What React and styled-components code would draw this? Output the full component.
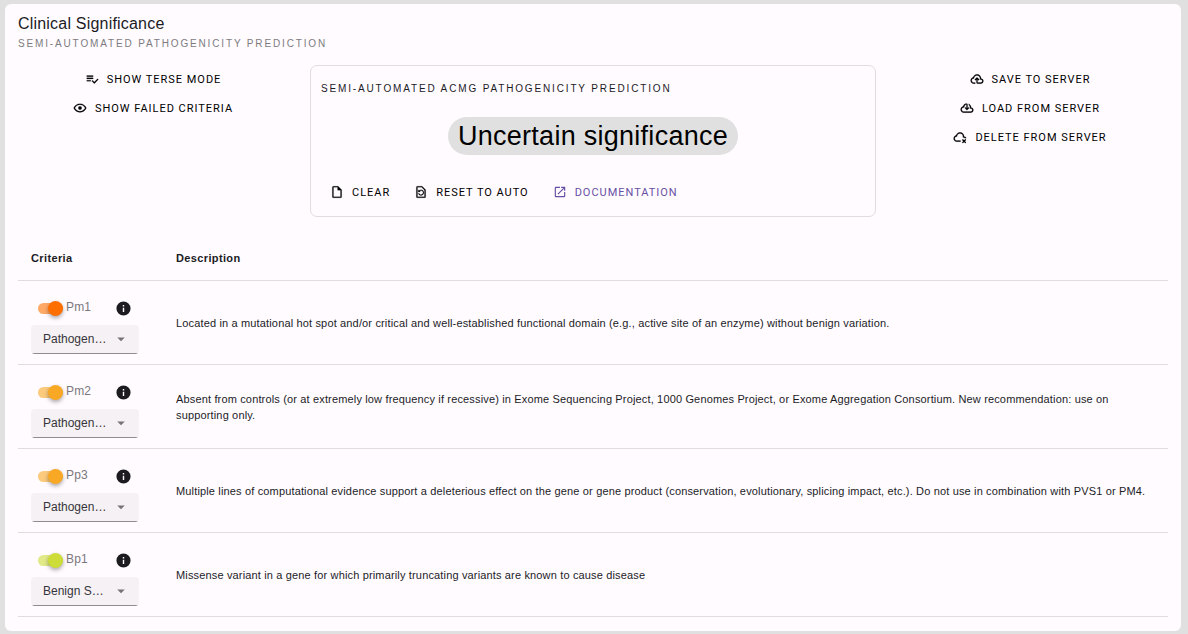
import React, { useState } from "react";
import styled, { createGlobalStyle } from "styled-components";

const GlobalStyle = createGlobalStyle`
  *, *::before, *::after { box-sizing: border-box; }
  body {
    margin: 0;
    background: #e0e0e0;
    color: #1c1b1f;
    font-family: "Liberation Sans", Arial, sans-serif;
  }
`;

const Card = styled.main`
  margin: 4px 7px 3px 5px;
  padding: 10px 13px 14px;
  background: #fffbff;
  border-radius: 6px;
`;

const Title = styled.h1`
  margin: 0;
  font-size: 16px;
  font-weight: 400;
  line-height: 20px;
  letter-spacing: 0.0125em;
`;

const Overline = styled.p`
  margin: 0;
  font-size: 10px;
  line-height: 20px;
  letter-spacing: 0.185em;
  text-transform: uppercase;
  color: ${(p) => (p.$muted ? "#7d7b80" : "#1c1b1f")};
`;

const Top = styled.section`
  display: grid;
  grid-template-columns: 270px minmax(0, 1fr) 270px;
  gap: 22px;
  margin-top: 11px;
`;

const Actions = styled.div`
  display: flex;
  flex-direction: column;
  align-items: center;
  padding-right: ${(p) => (p.$inset ? "6px" : "0")};
`;

const actionStyle = `
  display: inline-flex;
  align-items: center;
  gap: 8px;
  height: 29px;
  padding: 0 9px 2px;
  border: 0;
  background: none;
  font-family: Roboto, "Liberation Sans", sans-serif;
  font-size: 11px;
  line-height: 16px;
  letter-spacing: 0.0893em;
  text-transform: uppercase;
  text-decoration: none;
  white-space: nowrap;
  cursor: pointer;
`;

const ActionButton = styled.button`
  ${actionStyle}
  color: #000;
`;

const ActionLink = styled.a`
  ${actionStyle}
  color: #6750a4;
`;

const ActionText = styled.span`
  padding-top: 2px;
`;

const Glyph = styled.svg`
  width: ${(p) => p.$size}px;
  height: ${(p) => p.$size}px;
  fill: currentColor;
  stroke: ${(p) => (p.$bold ? "currentColor" : "none")};
  stroke-width: 0.3;
  flex: none;
`;

const Prediction = styled.div`
  padding: 13px 10px 9px;
  border: 1px solid #e0dce0;
  border-radius: 7px;
`;

const ChipRow = styled.div`
  display: flex;
  justify-content: center;
  padding: 18px 0 23px;
`;

const Chip = styled.span`
  padding: 0 10px;
  border-radius: 19px;
  background: #e0e0e0;
  color: #000;
  font-size: 27px;
  line-height: 38px;
  letter-spacing: 0.01em;
`;

const Toolbar = styled.div`
  display: flex;
  gap: 6px;
`;

const Table = styled.table`
  width: 100%;
  margin-top: 19px;
  border-collapse: separate;
  border-spacing: 0;
  table-layout: fixed;
  font-size: 11px;
  line-height: 16px;
  letter-spacing: 0.014em;
`;

const HeadCell = styled.th`
  width: ${(p) => (p.$narrow ? "145px" : "auto")};
  height: 45px;
  padding: 0 13px;
  border-bottom: 1px solid #e0dce0;
  text-align: left;
  font-weight: 700;
  letter-spacing: 0.0333em;
`;

const Cell = styled.td`
  height: 84px;
  padding: 0 13px;
  border-bottom: 1px solid #e0dce0;
`;

const Criterion = styled.div`
  display: flex;
  flex-direction: column;
  width: 108px;
  padding-top: 7px;
`;

const SwitchRow = styled.div`
  display: flex;
  align-items: center;
  justify-content: space-between;
  height: 20px;
  margin-bottom: 6px;
  padding: 0 7px;
`;

const SwitchLabel = styled.label`
  display: flex;
  align-items: center;
  gap: 3px;
  color: #7a787c;
  font-size: 12px;
  letter-spacing: 0.014em;
  cursor: pointer;
`;

const SwitchText = styled.span`
  padding-bottom: 3px;
`;

const Switch = styled.input`
  appearance: none;
  display: flex;
  align-items: center;
  justify-content: flex-end;
  width: 25px;
  height: 11px;
  margin: 0;
  border-radius: 6px;
  background: ${(p) => p.$track};
  cursor: pointer;

  &::before {
    content: "";
    width: 15px;
    height: 15px;
    flex: none;
    border-radius: 50%;
    background: ${(p) => p.$thumb};
    box-shadow: 0 2px 4px rgba(0, 0, 0, 0.35);
  }

  &:not(:checked) {
    justify-content: flex-start;
  }
`;

const InfoButton = styled.button`
  display: flex;
  padding: 0;
  border: 0;
  background: none;
  color: #1c1b1f;
  cursor: pointer;
`;

const SelectBox = styled.div`
  display: grid;
  align-items: center;
  height: 29px;
  padding-bottom: 1px;
  border-radius: 4px;
  background: linear-gradient(to top, #8f8c90 1px, #f5f1f5 1px);
  color: #757378;

  & > * {
    grid-area: 1 / 1;
  }

  & > svg {
    justify-self: end;
    margin-right: 9px;
    pointer-events: none;
  }
`;

const Select = styled.select`
  appearance: none;
  width: 100%;
  height: 28px;
  padding: 0 32px 0 12px;
  border: 0;
  background: none;
  color: #37353a;
  font-family: inherit;
  font-size: 12px;
  letter-spacing: 0;
  text-overflow: ellipsis;
  white-space: nowrap;
  overflow: hidden;
  cursor: pointer;
`;

const paths = {
  terse:
    "M14 10H3V12H14V10M14 6H3V8H14V6M3 16H10V14H3V16M21.5 11.5L23 13L16 20L11.5 15.5L13 14L16 17L21.5 11.5Z",
  eye: "M12,9A3,3 0 0,1 15,12A3,3 0 0,1 12,15A3,3 0 0,1 9,12A3,3 0 0,1 12,9M12,4.5C17,4.5 21.27,7.61 23,12C21.27,16.39 17,19.5 12,19.5C7,19.5 2.73,16.39 1,12C2.73,7.61 7,4.5 12,4.5M3.18,12C4.83,15.36 8.24,17.5 12,17.5C15.76,17.5 19.17,15.36 20.82,12C19.17,8.64 15.76,6.5 12,6.5C8.24,6.5 4.83,8.64 3.18,12Z",
  upload:
    "M6.5 20Q4.22 20 2.61 18.43 1 16.85 1 14.58 1 12.63 2.17 11.1 3.35 9.57 5.25 9.15 5.88 6.85 7.75 5.43 9.63 4 12 4 14.93 4 16.96 6.04 19 8.07 19 11 20.73 11.2 21.86 12.5 23 13.78 23 15.5 23 17.38 21.69 18.69 20.38 20 18.5 20H13Q12.18 20 11.59 19.41 11 18.83 11 18V12.85L9.4 14.4L8 13L12 9L16 13L14.6 14.4L13 12.85V18H18.5Q19.55 18 20.27 17.27 21 16.55 21 15.5 21 14.45 20.27 13.73 19.55 13 18.5 13H17V11Q17 8.93 15.54 7.46 14.08 6 12 6 9.93 6 8.46 7.46 7 8.93 7 11H6.5Q5.05 11 4.03 12.03 3 13.05 3 14.5 3 15.95 4.03 17 5.05 18 6.5 18H9V20Z",
  download:
    "M6.5 20Q4.22 20 2.61 18.43 1 16.85 1 14.58 1 12.63 2.17 11.1 3.35 9.57 5.25 9.15 5.68 7.35 7.38 5.73 9.07 4.1 11 4.1 11.83 4.1 12.41 4.69 13 5.28 13 6.1V12.15L14.6 10.6L16 12L12 16L8 12L9.4 10.6L11 12.15V6.1Q9.1 6.45 8.05 7.94 7 9.43 7 11H6.5Q5.05 11 4.03 12.03 3 13.05 3 14.5 3 15.95 4.03 17 5.05 18 6.5 18H18.5Q19.55 18 20.27 17.27 21 16.55 21 15.5 21 14.45 20.27 13.73 19.55 13 18.5 13H17V11Q17 9.8 16.45 8.76 15.9 7.73 15 7V4.68Q16.85 5.55 17.93 7.26 19 9 19 11 20.73 11.2 21.86 12.5 23 13.78 23 15.5 23 17.38 21.69 18.69 20.38 20 18.5 20Z",
  remove:
    "M6.5 20Q4.22 20 2.61 18.43 1 16.85 1 14.58 1 12.63 2.17 11.1 3.35 9.57 5.25 9.15 5.88 6.85 7.75 5.43 9.63 4 12 4 14.93 4 16.96 6.04 19 8.07 19 11 20.9 11.2 22 12.6 22.6 13.3 22.8 14H20.4Q19.7 13 18.5 13H17V11Q17 8.93 15.54 7.46 14.08 6 12 6 9.93 6 8.46 7.46 7 8.93 7 11H6.5Q5.05 11 4.03 12.03 3 13.05 3 14.5 3 15.95 4.03 17 5.05 18 6.5 18H13V20ZM15.5 17L16.9 15.6L19 17.7L21.1 15.6L22.5 17L20.4 19.1L22.5 21.2L21.1 22.6L19 20.5L16.9 22.6L15.5 21.2L17.6 19.1Z",
  file: "M14,2H6A2,2 0 0,0 4,4V20A2,2 0 0,0 6,22H18A2,2 0 0,0 20,20V8L14,2M18,20H6V4H13V9H18V20Z",
  reset:
    "M14,2H6A2,2 0 0,0 4,4V20A2,2 0 0,0 6,22H18A2,2 0 0,0 20,20V8L14,2M18,20H6V4H13.2L18,8.8V20M12,8C10.7,8 9.5,8.6 8.7,9.5L7.3,8.1V12H11.2L9.8,10.6C10.3,10 11.1,9.5 12,9.5A3.5,3.5 0 1,1 8.7,14.3H7.1A5,5 0 1,0 12,8Z",
  open: "M14,3V5H17.59L7.76,14.83L9.17,16.24L19,6.41V10H21V3M19,19H5V5H12V3H5C3.89,3 3,3.9 3,5V19A2,2 0 0,0 5,21H19A2,2 0 0,0 21,19V12H19V19Z",
  info: "M13,9H11V7H13M13,17H11V11H13M12,2A10,10 0 0,0 2,12A10,10 0 0,0 12,22A10,10 0 0,0 22,12A10,10 0 0,0 12,2Z",
  caret: "M7,10L12,15L17,10H7Z",
};

function Icon({ name, size = 14, bold = false }) {
  return (
    <Glyph viewBox="0 0 24 24" $size={size} $bold={bold} aria-hidden="true">
      <path d={paths[name]} />
    </Glyph>
  );
}

function Action({ icon, children }) {
  return (
    <ActionButton type="button">
      <Icon name={icon} bold />
      <ActionText>{children}</ActionText>
    </ActionButton>
  );
}

const strengths = ["Pathogenic Moderate", "Pathogenic Supporting", "Benign Supporting"];

const criteria = [
  {
    id: "Pm1",
    value: "Pathogenic Moderate",
    thumb: "#ff6f00",
    track: "#ffa966",
    text: "Located in a mutational hot spot and/or critical and well-established functional domain (e.g., active site of an enzyme) without benign variation.",
  },
  {
    id: "Pm2",
    value: "Pathogenic Supporting",
    thumb: "#f9a825",
    track: "#fbca7c",
    text: "Absent from controls (or at extremely low frequency if recessive) in Exome Sequencing Project, 1000 Genomes Project, or Exome Aggregation Consortium. New recommendation: use on supporting only.",
  },
  {
    id: "Pp3",
    value: "Pathogenic Supporting",
    thumb: "#f9a825",
    track: "#fbca7c",
    text: "Multiple lines of computational evidence support a deleterious effect on the gene or gene product (conservation, evolutionary, splicing impact, etc.). Do not use in combination with PVS1 or PM4.",
  },
  {
    id: "Bp1",
    value: "Benign Supporting",
    thumb: "#cddc39",
    track: "#e1e988",
    text: "Missense variant in a gene for which primarily truncating variants are known to cause disease",
  },
];

function CriterionRow({ item }) {
  const [on, setOn] = useState(true);
  const [value, setValue] = useState(item.value);
  return (
    <tr>
      <Cell>
        <Criterion>
          <SwitchRow>
            <SwitchLabel>
              <Switch
                type="checkbox"
                checked={on}
                onChange={(e) => setOn(e.target.checked)}
                $thumb={item.thumb}
                $track={item.track}
              />
              <SwitchText>{item.id}</SwitchText>
            </SwitchLabel>
            <InfoButton type="button" aria-label={`About ${item.id}`}>
              <Icon name="info" size={17} />
            </InfoButton>
          </SwitchRow>
          <SelectBox>
            <Select
              aria-label={`${item.id} strength`}
              value={value}
              onChange={(e) => setValue(e.target.value)}
            >
              {strengths.map((s) => (
                <option key={s}>{s}</option>
              ))}
            </Select>
            <Icon name="caret" size={18} />
          </SelectBox>
        </Criterion>
      </Cell>
      <Cell>{item.text}</Cell>
    </tr>
  );
}

export default function App() {
  return (
    <>
      <GlobalStyle />
      <Card>
        <Title>Clinical Significance</Title>
        <Overline $muted>Semi-automated pathogenicity prediction</Overline>
        <Top>
          <Actions>
            <Action icon="terse">Show terse mode</Action>
            <Action icon="eye">Show failed criteria</Action>
          </Actions>
          <Prediction>
            <Overline>Semi-automated ACMG pathogenicity prediction</Overline>
            <ChipRow>
              <Chip>Uncertain significance</Chip>
            </ChipRow>
            <Toolbar>
              <Action icon="file">Clear</Action>
              <Action icon="reset">Reset to auto</Action>
              <ActionLink href="#documentation">
                <Icon name="open" />
                <ActionText>Documentation</ActionText>
              </ActionLink>
            </Toolbar>
          </Prediction>
          <Actions $inset>
            <Action icon="upload">Save to server</Action>
            <Action icon="download">Load from server</Action>
            <Action icon="remove">Delete from server</Action>
          </Actions>
        </Top>
        <Table>
          <thead>
            <tr>
              <HeadCell scope="col" $narrow>Criteria</HeadCell>
              <HeadCell scope="col">Description</HeadCell>
            </tr>
          </thead>
          <tbody>
            {criteria.map((item) => (
              <CriterionRow key={item.id} item={item} />
            ))}
          </tbody>
        </Table>
      </Card>
    </>
  );
}
